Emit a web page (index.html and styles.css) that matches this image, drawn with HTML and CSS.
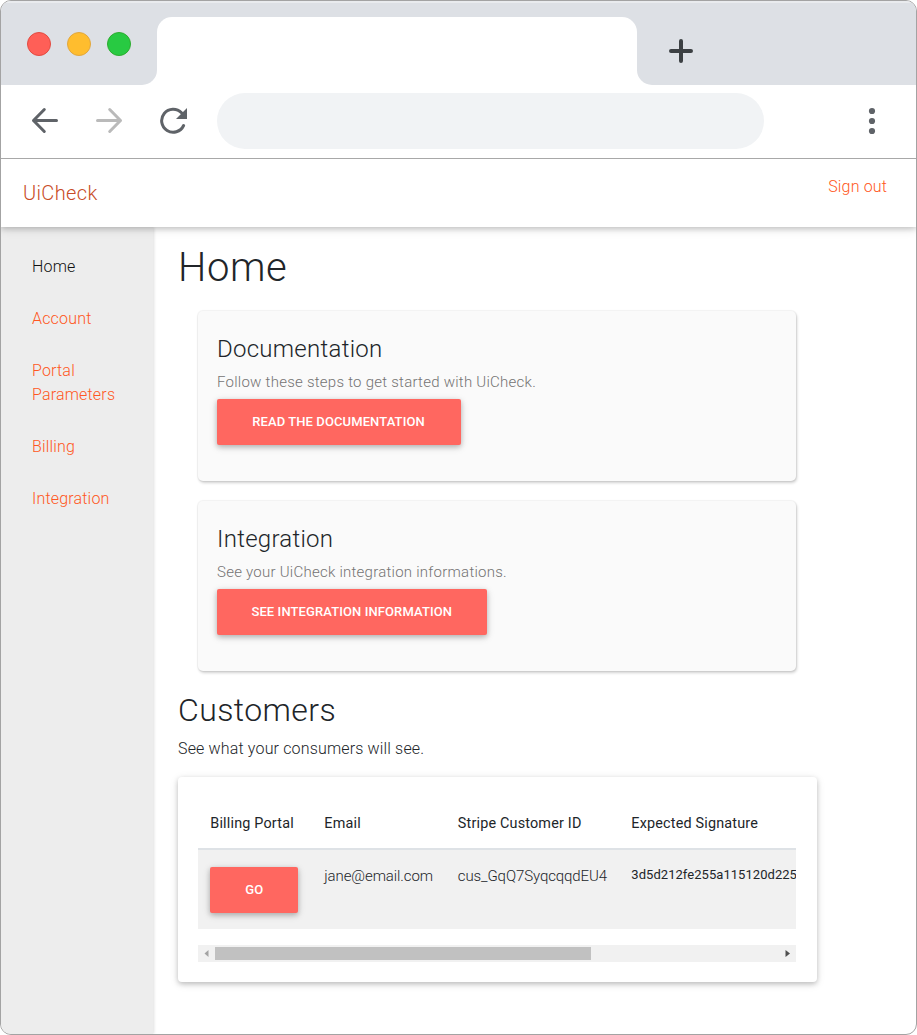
FILE: index.html
```
<!DOCTYPE html>
<html lang="en">
<head>
<meta charset="utf-8">
<title>UiCheck</title>
<link rel="stylesheet" href="styles.css">
</head>
<body>
<div class="browser">
  <div class="tabstrip">
    <div class="strip-left">
      <span class="light red"></span><span class="light yellow"></span><span class="light green"></span>
    </div>
    <div class="strip-tab"><div class="tab"></div></div>
    <div class="strip-right">
      <svg width="24" height="24" viewBox="0 0 24 24"><path d="M12 2v20M2 12h20" stroke="#3c4043" stroke-width="4" stroke-linecap="round"/></svg>
    </div>
  </div>
  <div class="toolbar">
    <svg class="back" width="28" height="28" viewBox="0 0 28 28"><path d="M25.500 13.500H2.500M13.300 2.500L2.500 13.500l10.800 11" fill="none" stroke="#5f6368" stroke-width="3" stroke-linecap="round" stroke-linejoin="round"/></svg>
    <svg class="forward" width="28" height="28" viewBox="0 0 28 28"><path d="M2.500 13.500H25.500M14.700 2.500L25.500 13.500l-10.800 11" fill="none" stroke="#bababa" stroke-width="3" stroke-linecap="round" stroke-linejoin="round"/></svg>
    <svg class="reload" width="28" height="28" viewBox="0 0 28 28"><path d="M21.500 5.800A11.500 11.500 0 1 0 23.600 18.500" fill="none" stroke="#5f6368" stroke-width="3" stroke-linecap="round"/><path d="M27 1v11H16z" fill="#5f6368"/></svg>
    <div class="address"></div>
    <svg class="menu" width="8" height="28" viewBox="0 0 8 28"><g fill="#5f6368"><circle cx="4" cy="4" r="3.100"/><circle cx="4" cy="14" r="3.100"/><circle cx="4" cy="24" r="3.100"/></g></svg>
  </div>
  <header class="navbar">
    <a class="brand">UiCheck</a>
    <a class="signout">Sign out</a>
  </header>
  <div class="page">
    <nav class="sidebar">
      <a class="active">Home</a>
      <a>Account</a>
      <a>Portal Parameters</a>
      <a>Billing</a>
      <a>Integration</a>
    </nav>
    <main class="main">
      <h1>Home</h1>
      <section class="card">
        <h4>Documentation</h4>
        <p>Follow these steps to get started with UiCheck.</p>
        <button class="btn btn-docs">READ THE DOCUMENTATION</button>
      </section>
      <section class="card">
        <h4>Integration</h4>
        <p>See your UiCheck integration informations.</p>
        <button class="btn btn-info">SEE INTEGRATION INFORMATION</button>
      </section>
      <h2>Customers</h2>
      <p class="lead">See what your consumers will see.</p>
      <section class="panel">
        <div class="table">
          <div class="row head"><span>Billing Portal</span><span>Email</span><span>Stripe Customer ID</span><span>Expected Signature</span></div>
          <div class="row data">
            <span><button class="btn btn-go">GO</button></span>
            <span>jane@email.com</span>
            <span>cus_GqQ7SyqcqqdEU4</span>
            <span class="signature">3d5d212fe255a115120d225</span>
          </div>
        </div>
        <div class="scrollbar">
          <svg width="17" height="17" viewBox="0 0 17 17"><path d="M10.500 5v7L6.500 8.500z" fill="#a3a3a3"/></svg>
          <div class="thumb"></div>
          <svg class="arrow-right" width="17" height="17" viewBox="0 0 17 17"><path d="M6.500 5v7l4.500-3.500z" fill="#505050"/></svg>
        </div>
      </section>
    </main>
  </div>
</div>
</body>
</html>
```

FILE: styles.css
```
* { box-sizing: border-box; }
body { margin: 0; background: #fff; font-family: Roboto, "Liberation Sans", sans-serif; font-weight: 300; font-size: 16px; line-height: 24px; color: #212529; }
h1, h2, h4, p { margin: 0; font-weight: 300; }
svg { display: block; flex: none; }

.browser { width: 917px; height: 1035px; border: 1px solid #a3a3a3; border-radius: 11px; overflow: hidden; display: flex; flex-direction: column; }
.tabstrip { display: flex; height: 84px; flex: none; }
.strip-left { width: 156px; background: #dde0e5; border-bottom-right-radius: 15px; display: flex; gap: 16px; padding: 31px 0 0 26px; box-shadow: inset 0 2px #e9ebee; }
.light { width: 24px; height: 24px; border-radius: 50%; border: 1px solid; }
.red { background: #ff5f57; border-color: #e24b41; }
.yellow { background: #ffbd2e; border-color: #e1a73e; }
.green { background: #28ca42; border-color: #2dac2f; }
.strip-tab { width: 480px; background: #dde0e5; padding-top: 16px; box-shadow: inset 0 2px #e9ebee; }
.tab { height: 68px; background: #fff; border-radius: 15px 15px 0 0; }
.strip-right { flex: 1; background: #dde0e5; border-bottom-left-radius: 15px; padding: 38px 0 0 32px; box-shadow: inset 0 2px #e9ebee; }

.toolbar { height: 74px; flex: none; display: flex; align-items: flex-start; padding: 8px 40px 0 30px; background: #fff; border-bottom: 1px solid #a8a8a8; position: relative; z-index: 2; }
.toolbar svg { margin-top: 14px; }
.forward { margin-left: 36px; }
.reload { margin-left: 37px; }
.address { width: 547px; height: 56px; margin-left: 29px; border-radius: 28px; background: #f1f3f5; }
.menu { margin-left: auto; }

.navbar { height: 68px; flex: none; display: flex; justify-content: space-between; padding: 0 29px 0 22px; background: #fff; box-shadow: 0 2px 5px rgba(0,0,0,.16), 0 2px 10px rgba(0,0,0,.12); position: relative; z-index: 1; }
.brand { font-size: 20px; line-height: 68px; letter-spacing: .35px; color: #c84b26; }
.signout { margin-top: 16px; letter-spacing: .15px; color: #ff5722; }

.page { flex: 1; display: flex; }
.sidebar { width: 152px; flex: none; background: #ededed; box-shadow: 1px 0 3px rgba(0,0,0,.13); padding: 28px 24px 0 31px; display: flex; flex-direction: column; gap: 28px; letter-spacing: .18px; color: #ff5722; }
.active { color: #111; }
.main { padding: 16px 0 0 25px; }
h1 { font-size: 40px; line-height: 50px; letter-spacing: .6px; margin-bottom: 18px; }
.card { width: 598px; height: 170px; margin: 0 0 20px 20px; padding: 24px 19px; background: #fafafa; border-radius: 5px; box-shadow: 0 0 1px 1px rgba(0,0,0,.05), 1px 2px 3px rgba(0,0,0,.18); }
h4 { font-size: 24px; line-height: 29px; letter-spacing: .27px; margin-bottom: 6px; }
.card p { font-size: 15px; line-height: 24px; letter-spacing: .25px; color: #747373; margin-bottom: 5px; }
.btn { display: block; height: 46px; border: 0; border-radius: 2px; padding: 0; background: #ff6760; color: #fff; font: 500 13px/46px Roboto, sans-serif; letter-spacing: .1px; text-align: center; box-shadow: 0 2px 5px rgba(0,0,0,.2), 0 2px 9px rgba(0,0,0,.14); }
.card .btn { margin-left: -.5px; }
.btn-docs { width: 244px; }
.btn-info { width: 270.500px; }
.btn-go { width: 88px; }
h2 { font-size: 32px; line-height: 38px; letter-spacing: .4px; }
.lead { line-height: 24px; margin: 8px 0 16px; letter-spacing: .16px; }
.panel { width: 638.500px; height: 205px; padding: 32px 20px 0; background: #fff; border-radius: 4px; box-shadow: 0 2px 5px rgba(0,0,0,.2), 0 2px 10px rgba(0,0,0,.1); }
.table { width: 598px; overflow: hidden; }
.row { display: grid; grid-template-columns: 114px 133.500px 173.500px 177px; padding-left: 12.300px; white-space: nowrap; }
.head { height: 41px; line-height: 30px; font-size: 14.400px; letter-spacing: .18px; font-weight: 400; border-bottom: 2px solid #dee2e6; }
.data { height: 79px; padding-top: 17px; background: #f1f1f1; font-size: 15px; line-height: 19px; letter-spacing: -.1px; }
.signature { font-size: 13px; line-height: 16px; font-weight: 400; letter-spacing: .05px; }
.scrollbar { width: 598px; height: 17px; margin-top: 16px; display: flex; background: #f1f1f1; }
.thumb { width: 376px; height: 13px; margin-top: 2px; background: #c1c1c1; }
.arrow-right { margin-left: auto; }
```
